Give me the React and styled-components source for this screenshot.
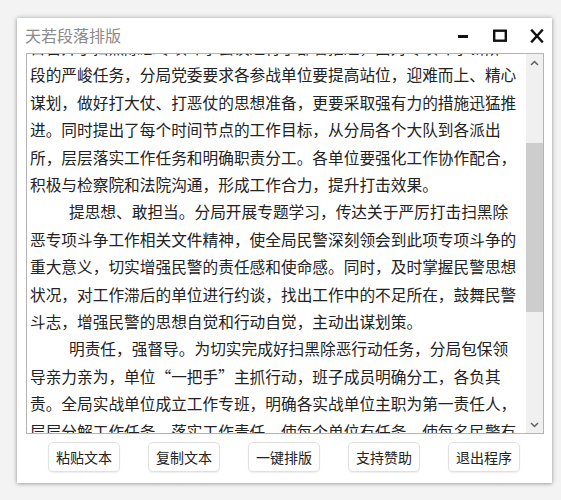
import React from 'react';
import styled, { createGlobalStyle } from 'styled-components';

const Global = createGlobalStyle`
  html, body { margin: 0; padding: 0; background: #f3f3f3; }
  body { font-family: "Noto Sans CJK SC", "Noto Sans", sans-serif; }
`;

const Page = styled.div`
  width: 561px;
  height: 500px;
  box-sizing: border-box;
  padding: 18px 0 0 17px;
`;

const Window = styled.div`
  width: 535px;
  height: 465px;
  background: #fff;
  box-shadow: 0 0 5px rgba(0, 0, 0, 0.28), 0 1px 3px rgba(0, 0, 0, 0.18);
  display: flex;
  flex-direction: column;
`;

const TitleBar = styled.div`
  height: 35px;
  flex-shrink: 0;
  display: flex;
  align-items: center;
  padding: 0 5px 0 8px;
`;

const Title = styled.div`
  flex: 1;
  font-size: 16px;
  line-height: 1;
  color: #8a8a8a;
  margin-top: -1px;
`;

const Controls = styled.div`
  display: flex;
  align-items: center;
  gap: 17px;
`;

const ControlBox = styled.div`
  width: 20px;
  height: 20px;
  display: flex;
  align-items: center;
  justify-content: center;
`;

const Body = styled.div`
  flex: 1;
  display: flex;
  flex-direction: column;
  padding: 0 8px 0 9px;
`;

const Editor = styled.div`
  height: 381px;
  box-sizing: border-box;
  border: 1px solid #b4b4b4;
  display: flex;
  background: #fff;
`;

const TextPane = styled.div`
  flex: 1;
  overflow: hidden;
  padding-left: 3px;
`;

const TextFlow = styled.div`
  margin-top: -20px;
  font-size: 15.7px;
  line-height: 27.4px;
  color: #222;
`;

const Line = styled.div`
  white-space: nowrap;
  padding-left: ${(p) => (p.$indent ? 39 : 0)}px;
`;

const Scrollbar = styled.div`
  width: 17px;
  display: flex;
  flex-direction: column;
  background: #f0f0f0;
`;

const ArrowBtn = styled.div`
  height: 17px;
  display: flex;
  align-items: center;
  justify-content: center;
`;

const Track = styled.div`
  flex: 1;
  display: flex;
  flex-direction: column;
`;

const TrackGap = styled.div`
  height: ${(p) => p.$h}px;
`;

const Thumb = styled.div`
  height: ${(p) => p.$h}px;
  background: #cdcdcd;
`;

const ButtonRow = styled.div`
  display: flex;
  gap: 28px;
  padding: 8px 0 0 22px;
`;

const Button = styled.button`
  width: 72px;
  height: 30px;
  box-sizing: border-box;
  background: #fff;
  border: 1px solid #e0e0e0;
  border-radius: 5px;
  box-shadow: 0 1px 2px rgba(0, 0, 0, 0.07);
  font-family: "Noto Sans CJK SC", "Noto Sans", sans-serif;
  font-size: 14px;
  color: #222;
  padding: 0;
  cursor: pointer;
`;

const lines = [
  { t: '日召开了扫黑除恶专项斗争会议进行了部署推进，面对专项斗争新阶' },
  { t: '段的严峻任务，分局党委要求各参战单位要提高站位，迎难而上、精心' },
  { t: '谋划，做好打大仗、打恶仗的思想准备，更要采取强有力的措施迅猛推' },
  { t: '进。同时提出了每个时间节点的工作目标，从分局各个大队到各派出' },
  { t: '所，层层落实工作任务和明确职责分工。各单位要强化工作协作配合，' },
  { t: '积极与检察院和法院沟通，形成工作合力，提升打击效果。' },
  { t: '提思想、敢担当。分局开展专题学习，传达关于严厉打击扫黑除', indent: true },
  { t: '恶专项斗争工作相关文件精神，使全局民警深刻领会到此项专项斗争的' },
  { t: '重大意义，切实增强民警的责任感和使命感。同时，及时掌握民警思想' },
  { t: '状况，对工作滞后的单位进行约谈，找出工作中的不足所在，鼓舞民警' },
  { t: '斗志，增强民警的思想自觉和行动自觉，主动出谋划策。' },
  { t: '明责任，强督导。为切实完成好扫黑除恶行动任务，分局包保领', indent: true },
  { t: '导亲力亲为，单位“一把手”主抓行动，班子成员明确分工，各负其' },
  { t: '责。全局实战单位成立工作专班，明确各实战单位主职为第一责任人，' },
  { t: '层层分解工作任务，落实工作责任，使每个单位有任务，使每名民警有' },
];

const buttons = ['粘贴文本', '复制文本', '一键排版', '支持赞助', '退出程序'];

const MinIcon = () => (
  <svg width="14" height="14" viewBox="0 0 14 14">
    <rect x="2" y="6" width="10" height="3" fill="#111" />
  </svg>
);

const MaxIcon = () => (
  <svg width="16" height="16" viewBox="0 0 16 16">
    <rect x="2.2" y="2.7" width="11.6" height="10" fill="none" stroke="#111" strokeWidth="2.4" />
  </svg>
);

const CloseIcon = () => (
  <svg width="14" height="14" viewBox="0 0 14 14">
    <path d="M2 1.5 L12 12.5 M12 1.5 L2 12.5" stroke="#111" strokeWidth="2.4" strokeLinecap="square" fill="none" />
  </svg>
);

const Chevron = ({ up }) => (
  <svg width="9" height="6" viewBox="0 0 9 6">
    <path
      d={up ? 'M1 5 L4.5 1.5 L8 5' : 'M1 1 L4.5 4.5 L8 1'}
      stroke="#606060"
      strokeWidth="1.5"
      fill="none"
    />
  </svg>
);

export default function App() {
  return (
    <>
      <Global />
      <Page>
        <Window>
          <TitleBar>
            <Title>天若段落排版</Title>
            <Controls>
              <ControlBox><MinIcon /></ControlBox>
              <ControlBox><MaxIcon /></ControlBox>
              <ControlBox><CloseIcon /></ControlBox>
            </Controls>
          </TitleBar>
          <Body>
            <Editor>
              <TextPane>
                <TextFlow>
                  {lines.map((l, i) => (
                    <Line key={i} $indent={l.indent}>{l.t}</Line>
                  ))}
                </TextFlow>
              </TextPane>
              <Scrollbar>
                <ArrowBtn><Chevron up /></ArrowBtn>
                <Track>
                  <TrackGap $h={72} />
                  <Thumb $h={169} />
                </Track>
                <ArrowBtn><Chevron /></ArrowBtn>
              </Scrollbar>
            </Editor>
            <ButtonRow>
              {buttons.map((b) => (
                <Button key={b}>{b}</Button>
              ))}
            </ButtonRow>
          </Body>
        </Window>
      </Page>
    </>
  );
}
